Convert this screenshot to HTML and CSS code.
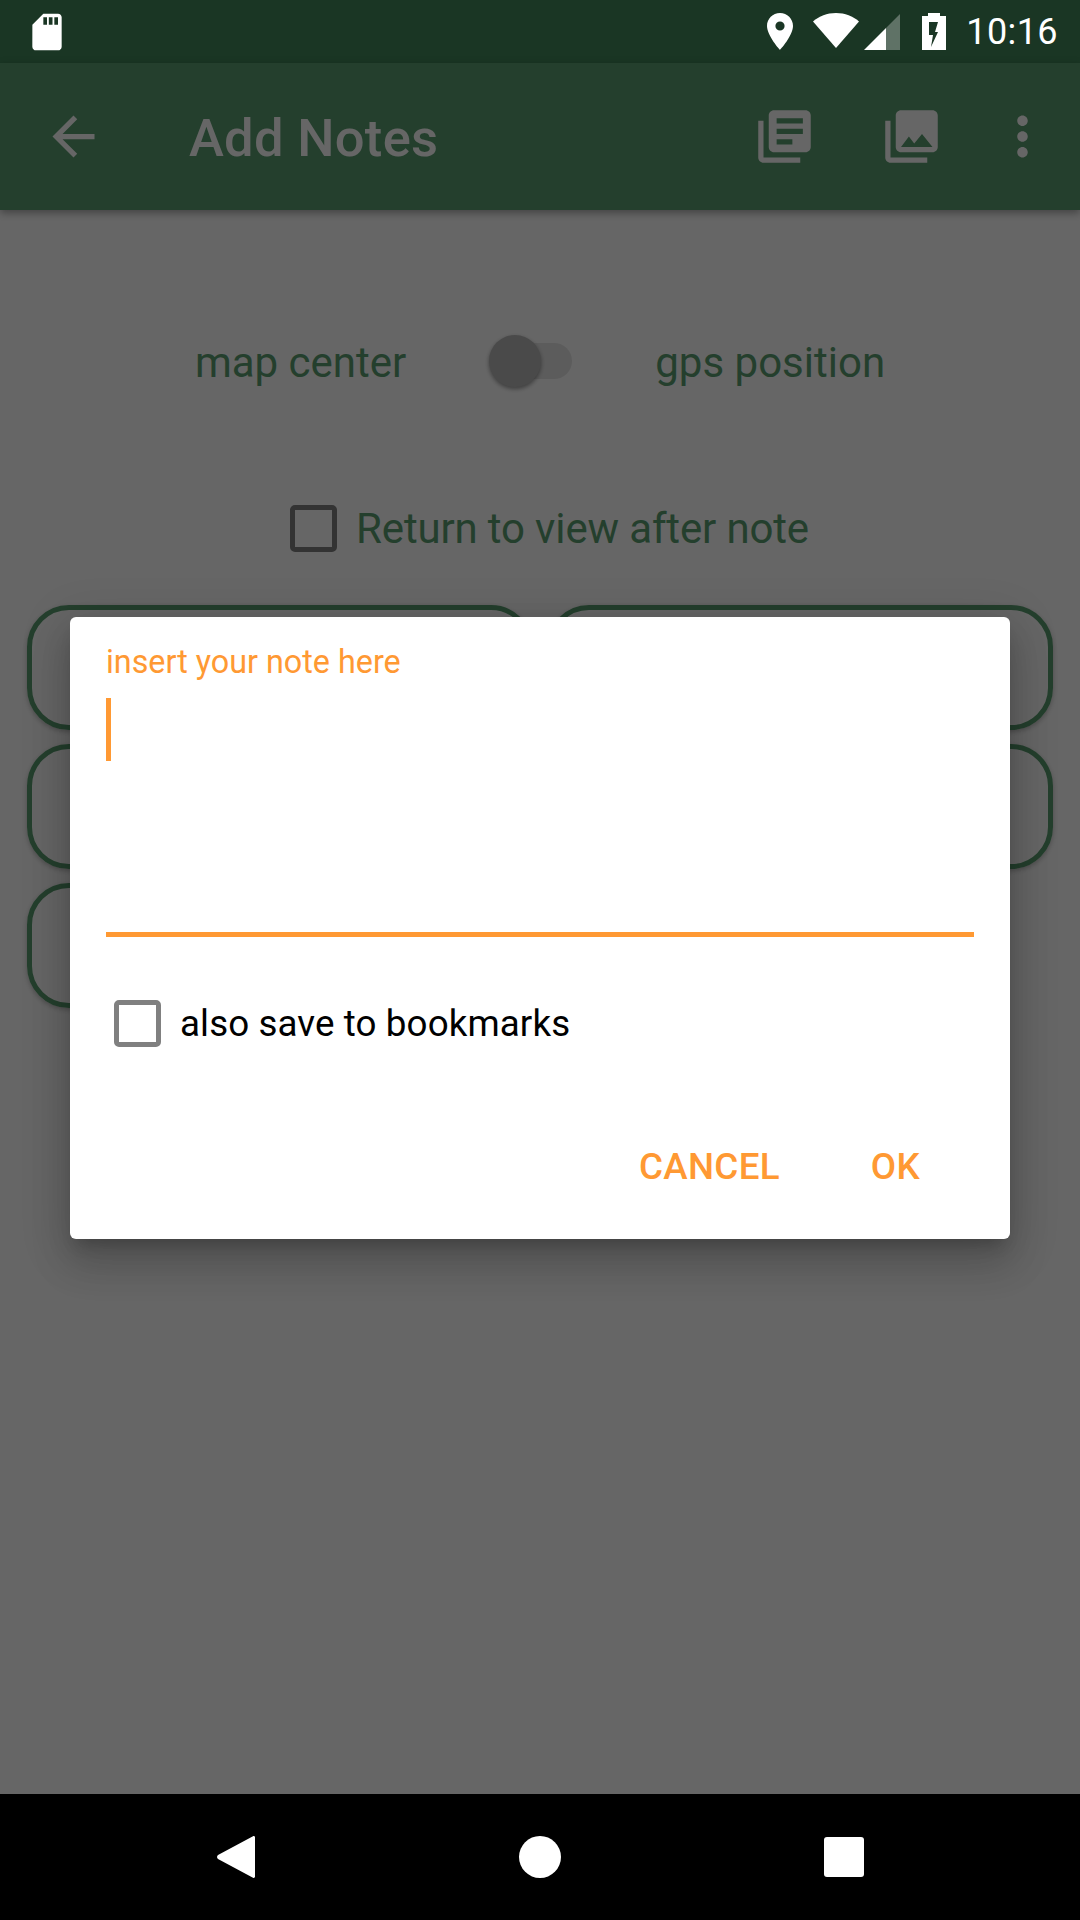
FILE: index.html
```html
<!DOCTYPE html>
<html>
<head>
    <meta charset="UTF-8">
    <title>Add Notes</title>
    <link rel="stylesheet" href="styles.css">
</head>
<body>
<div id="screen">
    <div id="status">
        <svg class="ic-sd" viewBox="0 0 24 24"><path d="M18 2h-8L4.020 8 4 20c0 1.100.9 2 2 2h12c1.100 0 2-.9 2-2V4c0-1.100-.9-2-2-2zm-6 6h-2V4h2v4zm3 0h-2V4h2v4zm3 0h-2V4h2v4z"/></svg>
        <div class="status-right">
            <svg class="ic-place" viewBox="0 0 26 37"><path fill-rule="evenodd" d="M13 0C5.800 0 0 5.800 0 13c0 9.700 13 24 13 24s13-14.300 13-24C26 5.800 20.200 0 13 0zm0 17.600a4.600 4.600 0 1 1 0-9.200 4.600 4.600 0 0 1 0 9.200z"/></svg>
            <svg class="ic-wifi" viewBox="0 0 46 35"><path d="M23 35L0 8.500C6 3.200 14 0 23 0s17 3.200 23 8.500z"/></svg>
            <svg class="ic-signal" viewBox="0 0 36 36"><path d="M36 0v36H22V14z" opacity=".3"/><path d="M22 14v22H0z"/></svg>
            <svg class="ic-battery" viewBox="0 0 24 37"><path fill-rule="evenodd" d="M6 0h12v3h6v34H0V3h6zM7 9v13h4l-2 12 7-15h-3l3-10z"/></svg>
            <span class="time">10:16</span>
        </div>
    </div>

    <div id="main">
        <div id="appbar">
            <svg class="ic back" viewBox="0 0 24 24"><path d="M20 11H7.830l5.590-5.590L12 4l-8 8 8 8 1.410-1.410L7.830 13H20v-2z"/></svg>
            <span class="title">Add Notes</span>
            <svg class="ic books" viewBox="0 0 24 24"><path d="M4 6H2v14c0 1.100.9 2 2 2h14v-2H4V6zm16-4H8c-1.100 0-2 .9-2 2v12c0 1.100.9 2 2 2h12c1.100 0 2-.9 2-2V4c0-1.100-.9-2-2-2zm-1 9H9V9h10v2zm-4 4H9v-2h6v2zm4-8H9V5h10v2z"/></svg>
            <svg class="ic photos" viewBox="0 0 24 24"><path d="M22 16V4c0-1.100-.9-2-2-2H8c-1.100 0-2 .9-2 2v12c0 1.100.9 2 2 2h12c1.100 0 2-.9 2-2zm-11-4l2.030 2.710L16 11l4 5H8l3-4zM2 6v14c0 1.100.9 2 2 2h14v-2H4V6H2z"/></svg>
            <svg class="ic more" viewBox="0 0 24 24"><path d="M12 8c1.100 0 2-.9 2-2s-.9-2-2-2-2 .9-2 2 .9 2 2 2zm0 2c-1.100 0-2 .9-2 2s.9 2 2 2 2-.9 2-2-.9-2-2-2zm0 6c-1.100 0-2 .9-2 2s.9 2 2 2 2-.9 2-2-.9-2-2-2z"/></svg>
        </div>

        <div id="content">
            <div class="switch-row">
                <span>map center</span>
                <div class="switch"><div class="thumb"></div></div>
                <span>gps position</span>
            </div>
            <div class="check-row">
                <div class="checkbox"></div>
                <span>Return to view after note</span>
            </div>
            <div class="buttons">
                <div class="btn"></div>
                <div class="btn"></div>
                <div class="btn"></div>
                <div class="btn"></div>
                <div class="btn"></div>
            </div>
        </div>

        <div id="overlay">
            <div id="dialog">
                <div class="hint">insert your note here</div>
                <div class="field"><div class="cursor"></div></div>
                <div class="save-row">
                    <div class="checkbox"></div>
                    <span>also save to bookmarks</span>
                </div>
                <div class="actions">
                    <span class="cancel">CANCEL</span>
                    <span>OK</span>
                </div>
            </div>
        </div>
    </div>

    <div id="navbar">
        <svg class="nav-back" viewBox="0 0 38 42"><path d="M36 .3L1 19c-1.300 1-1.300 3 0 4l35 18.700c1 .6 2 0 2-1.200V1.500C38 .3 37 -.3 36 .3z"/></svg>
        <div class="nav-home"></div>
        <div class="nav-recent"></div>
    </div>
</div>
</body>
</html>
```

FILE: styles.css
```css
* {
    box-sizing: border-box;
}

html,
body {
    margin: 0;
    padding: 0;
}

body {
    font-family: Roboto, "Liberation Sans", sans-serif;
}

#screen {
    width: 1080px;
    height: 1920px;
    display: flex;
    flex-direction: column;
    background: #fff;
    overflow: hidden;
}

/* status bar */
#status {
    height: 63px;
    flex: none;
    background: #1a3624;
    display: flex;
    align-items: center;
    justify-content: space-between;
    padding: 0 22px 0 25px;
    fill: #fff;
    color: #fff;
}

.ic-sd {
    width: 44px;
    height: 44px;
    display: block;
}

.status-right {
    display: flex;
    align-items: center;
}

.ic-place {
    width: 26px;
    height: 37px;
}

.ic-wifi {
    width: 46px;
    height: 35px;
    margin-left: 20px;
    margin-top: -2px;
}

.ic-signal {
    width: 36px;
    height: 36px;
    margin-left: 5px;
}

.ic-battery {
    width: 24px;
    height: 37px;
    margin-left: 22px;
}

.time {
    font-size: 36px;
    margin-left: 20px;
    letter-spacing: .4px;
}

/* page under the dim */
#main {
    flex: 1;
    position: relative;
    display: flex;
    flex-direction: column;
}

#appbar {
    height: 147px;
    flex: none;
    background: #5a9e70;
    display: flex;
    align-items: center;
    padding: 0 26px 0 42px;
    fill: #fff;
    color: #fff;
    box-shadow: 0 3px 8px rgba(0, 0, 0, .35);
    position: relative;
}

.ic {
    width: 63px;
    height: 63px;
    flex: none;
}

.title {
    font-size: 52.5px;
    font-weight: 500;
    letter-spacing: .3px;
    margin-top: 2px;
    margin-left: 84px;
    margin-right: auto;
}

.photos {
    margin-left: 64px;
}

.more {
    margin-left: 48px;
}

#content {
    flex: 1;
    color: #5a9e70;
    font-size: 42px;
}

.switch-row {
    display: flex;
    align-items: center;
    justify-content: center;
    gap: 83px;
    height: 100px;
    margin-top: 102px;
}

.switch {
    width: 79px;
    height: 36px;
    margin-left: 4px;
    margin-bottom: 3px;
    background: #e6e6e6;
    border-radius: 18px;
    position: relative;
}

.thumb {
    position: absolute;
    left: -4px;
    top: -8px;
    width: 52px;
    height: 52px;
    border-radius: 50%;
    background: #b9b9b9;
    box-shadow: 0 2px 4px rgba(0, 0, 0, .4);
}

.checkbox {
    width: 47px;
    height: 47px;
    flex: none;
    border: 5px solid #808080;
    border-radius: 5px;
}

.check-row {
    display: flex;
    align-items: center;
    justify-content: center;
    gap: 19px;
    height: 60px;
    margin-top: 86px;
    padding-left: 19px;
    letter-spacing: -.15px;
}

.buttons {
    display: grid;
    grid-template-columns: 506px 506px;
    grid-auto-rows: 125px;
    column-gap: 14px;
    row-gap: 14px;
    margin-top: 47px;
    padding-left: 27px;
}

.btn {
    border: 5px solid #5a9e70;
    border-radius: 42px;
    box-shadow: 0 2px 5px rgba(0, 0, 0, .25);
}

/* dialog */
#overlay {
    position: absolute;
    left: 0;
    top: 0;
    right: 0;
    bottom: 0;
    padding-bottom: 1px;
    background: rgba(0, 0, 0, .6);
    display: flex;
    align-items: center;
    justify-content: center;
}

#dialog {
    width: 940px;
    height: 622px;
    padding: 0 36px;
    background: #fff;
    border-radius: 6px;
    box-shadow: 0 24px 38px 3px rgba(0, 0, 0, .14), 0 9px 46px 8px rgba(0, 0, 0, .12), 0 11px 15px -7px rgba(0, 0, 0, .2);
    display: flex;
    flex-direction: column;
}

.hint {
    color: #ff9933;
    font-size: 32.3px;
    line-height: 37px;
    margin-top: 27px;
}

.field {
    height: 239px;
    margin-top: 17px;
    border-bottom: 5px solid #ff9933;
}

.cursor {
    width: 5px;
    height: 63px;
    background: #ff9933;
}

.save-row {
    display: flex;
    align-items: center;
    gap: 19px;
    margin-top: 63px;
    padding-left: 8px;
    font-size: 36.75px;
    letter-spacing: .1px;
    color: #000;
}

.actions {
    display: flex;
    justify-content: flex-end;
    gap: 91px;
    margin-top: auto;
    margin-bottom: 51px;
    padding-right: 54px;
    color: #ff9933;
    font-size: 36.75px;
    font-weight: 500;
    letter-spacing: .3px;
}

/* nav bar */
#navbar {
    height: 126px;
    flex: none;
    background: #000;
    display: grid;
    grid-template-columns: 38px 42px 40px;
    justify-content: space-between;
    align-items: center;
    padding: 0 216px 0 217px;
}

.nav-back {
    width: 38px;
    height: 42px;
    fill: #fff;
    display: block;
}

.nav-home {
    width: 42px;
    height: 42px;
    border-radius: 50%;
    background: #fff;
}

.nav-recent {
    width: 40px;
    height: 40px;
    border-radius: 3px;
    background: #fff;
}
```
